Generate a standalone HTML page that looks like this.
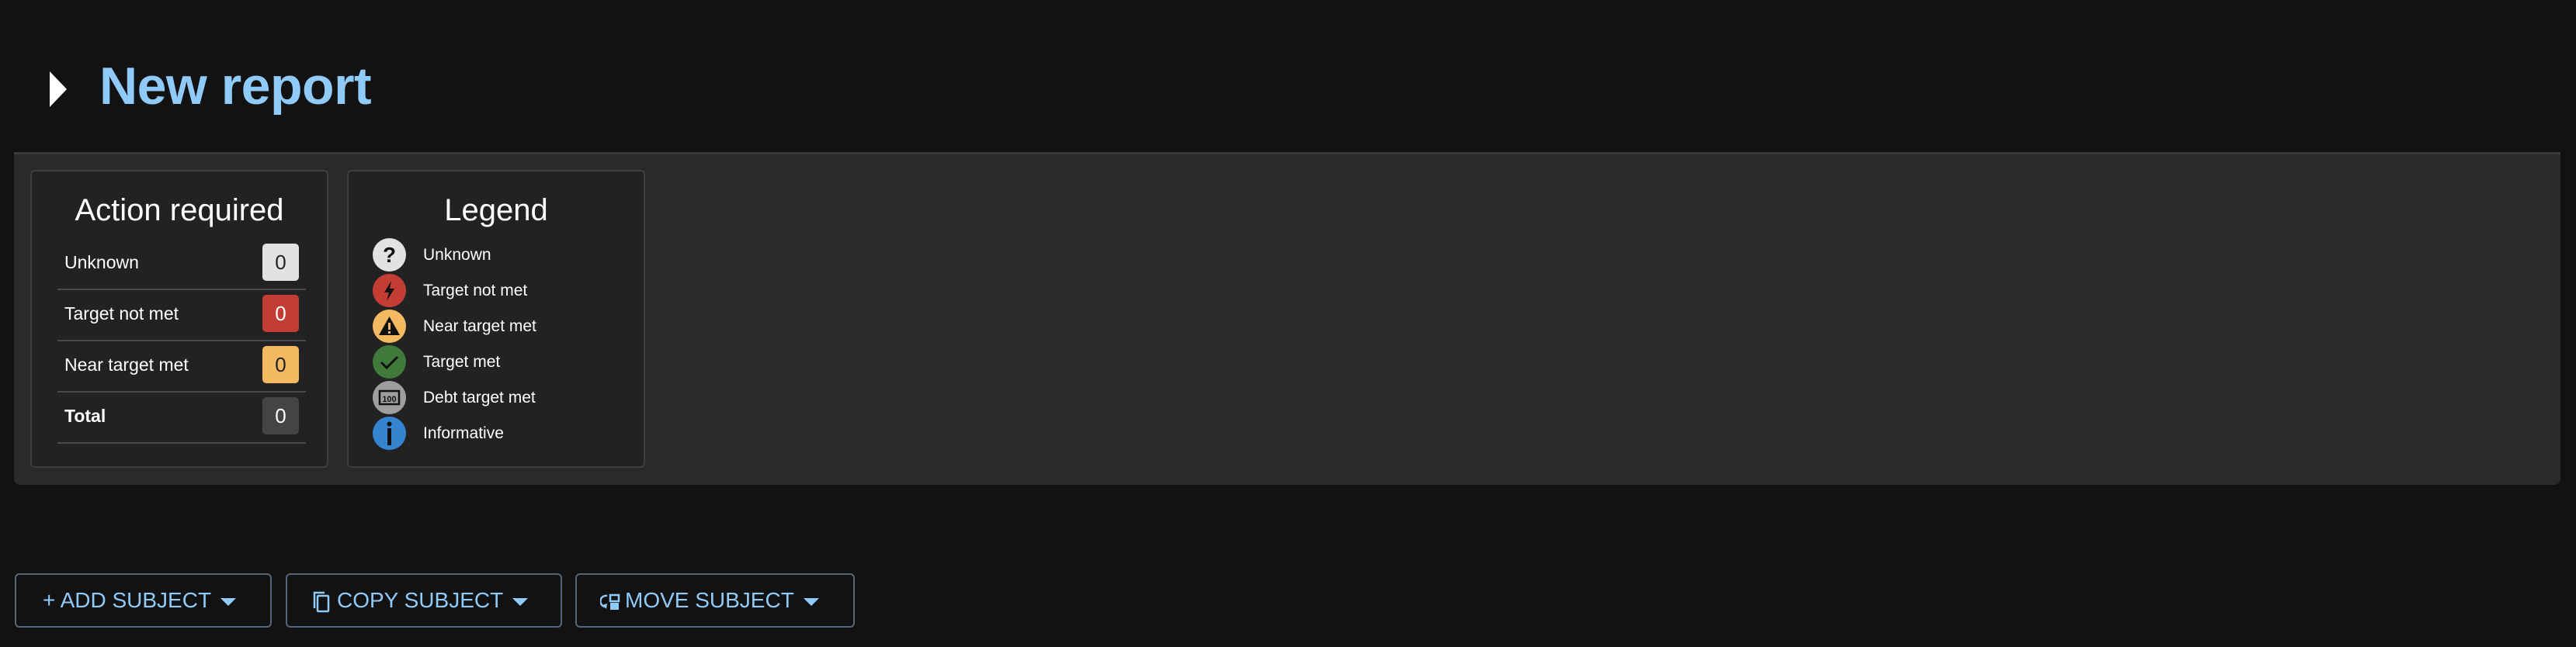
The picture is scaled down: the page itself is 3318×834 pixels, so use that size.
<!DOCTYPE html>
<html><head><style>
body{margin:0;width:3318px;height:834px;background:#121212;font-family:"Liberation Sans",sans-serif;overflow:hidden;position:relative}
.hdr{position:absolute;left:18px;top:36px;width:3280px;height:161px;background:#121212;border-radius:8px 8px 0 0}
.sep{position:absolute;left:18px;top:196px;width:3280px;height:3px;background:#3a3a3a}
.panel{position:absolute;left:18px;top:199px;width:3280px;height:426px;background:#2a2a2a;border-radius:0 0 8px 8px}
.tri{position:absolute;left:64px;top:92px;width:0;height:0;border-top:23px solid transparent;border-bottom:23px solid transparent;border-left:22px solid #fff}
h1{position:absolute;left:128px;top:72px;margin:0;font-size:68px;font-weight:bold;color:#90caf9;letter-spacing:-0.5px}
.card{position:absolute;top:219px;width:384px;height:384px;background:#222;border:2px solid #3e3e3e;border-radius:6px;box-sizing:border-box}
.ct{position:absolute;left:0;right:0;top:28px;text-align:center;color:#fff;font-size:40px}
.row{position:absolute;left:33px;width:320px;height:66px;border-bottom:2px solid #4a4a4a;color:#fff;font-size:23px}
.row span{position:absolute;left:9px;top:19px}
.badge{position:absolute;left:264px;top:8px;width:47px;height:48px;border-radius:5px;text-align:center;line-height:48px;font-size:26px}
.li{position:absolute;left:31px;height:44px;color:#fff;font-size:21px}
.ic{position:absolute;left:0;top:0;width:43px;height:43px;border-radius:50%}
.li span{position:absolute;left:65px;top:10px;white-space:nowrap}
.btn{position:absolute;top:739px;height:70px;border:2px solid #56667a;border-radius:6px;box-sizing:border-box;color:#90caf9;font-size:28px;line-height:66px;white-space:nowrap}
.car{display:inline-block;width:0;height:0;border-left:10px solid transparent;border-right:10px solid transparent;border-top:10px solid #90caf9;vertical-align:middle;margin-left:12px}
</style></head><body>
<div class="hdr"></div><div class="sep"></div><div class="panel"></div>
<div class="tri"></div>
<h1>New report</h1>
<div class="card" style="left:39px">
<div class="ct">Action required</div>
<div class="row" style="top:85px"><span>Unknown</span><div class="badge" style="background:#e2e2e2;color:#222">0</div></div>
<div class="row" style="top:151px"><span>Target not met</span><div class="badge" style="background:#c43d35;color:#fff">0</div></div>
<div class="row" style="top:217px"><span>Near target met</span><div class="badge" style="background:#f3ba62;color:#222">0</div></div>
<div class="row" style="top:283px"><span style="font-weight:bold">Total</span><div class="badge" style="background:#444;color:#fff">0</div></div>
</div>
<div class="card" style="left:447px">
<div class="ct">Legend</div>
<div class="li" style="top:86px"><div class="ic" style="background:#e2e2e2"><svg width="43" height="43"><text x="21.5" y="31" text-anchor="middle" font-size="28" font-weight="bold" font-family="Liberation Sans" fill="#111">?</text></svg></div><span>Unknown</span></div>
<div class="li" style="top:132px"><div class="ic" style="background:#c43d35"><svg width="43" height="43"><path d="M24 9 L15 24 L21 24 L18 35 L28 19 L22 19 Z" fill="#111"/></svg></div><span>Target not met</span></div>
<div class="li" style="top:178px"><div class="ic" style="background:#f3ba62"><svg width="43" height="43"><path d="M21.5 9 L35 33 L8 33 Z" fill="#111"/><rect x="20" y="17" width="3" height="9" fill="#f3ba62"/><rect x="20" y="28" width="3" height="3" fill="#f3ba62"/></svg></div><span>Near target met</span></div>
<div class="li" style="top:224px"><div class="ic" style="background:#3f7a3a"><svg width="43" height="43"><path d="M11 22 L18 29 L32 15" stroke="#111" stroke-width="3" fill="none"/></svg></div><span>Target met</span></div>
<div class="li" style="top:270px"><div class="ic" style="background:#9e9e9e"><svg width="43" height="43"><rect x="9" y="13" width="25" height="17" fill="none" stroke="#111" stroke-width="2.5"/><text x="21.5" y="27" text-anchor="middle" font-size="11" font-weight="bold" font-family="Liberation Sans" fill="#111">100</text></svg></div><span>Debt target met</span></div>
<div class="li" style="top:316px"><div class="ic" style="background:#3584d0"><svg width="43" height="43"><circle cx="21.5" cy="9.5" r="3" fill="#111"/><rect x="19" y="15" width="5" height="22" fill="#111"/></svg></div><span>Informative</span></div>
</div>
<div class="btn" style="left:19px;width:331px;padding-left:34px">+ ADD SUBJECT<span class="car"></span></div>
<div class="btn" style="left:368px;width:356px;padding-left:32px"><svg width="24" height="28" style="vertical-align:middle;margin-right:8px"><rect x="7" y="6" width="14" height="20" rx="1" fill="none" stroke="#90caf9" stroke-width="2.5"/><path d="M3 22 V2 H16" fill="none" stroke="#90caf9" stroke-width="2.5"/></svg>COPY SUBJECT<span class="car"></span></div>
<div class="btn" style="left:741px;width:360px;padding-left:30px"><svg width="26" height="28" style="vertical-align:middle;margin-right:6px"><path d="M9 6 A7 7 0 0 0 6 20" fill="none" stroke="#90caf9" stroke-width="2.5"/><path d="M3 18 L8 23 L9 16 Z" fill="#90caf9"/><rect x="13" y="5" width="11" height="8" fill="none" stroke="#90caf9" stroke-width="2.5"/><rect x="13" y="15" width="11" height="9" fill="#90caf9"/></svg>MOVE SUBJECT<span class="car"></span></div>
</body></html>
